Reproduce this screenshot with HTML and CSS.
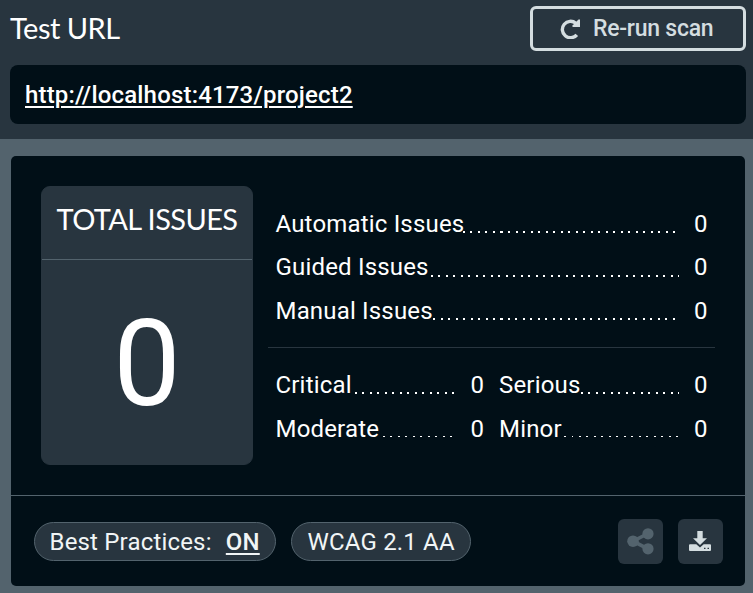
FILE: index.html
```html
<!DOCTYPE html>
<html lang="en">
<head>
<meta charset="utf-8">
<title>Test URL</title>
<link rel="stylesheet" href="styles.css">
</head>
<body>
<header class="top">
  <div class="bar">
    <h1>Test URL</h1>
    <button class="rerun"><svg width="20" height="20" viewBox="0 0 20 20" aria-hidden="true"><path d="M16.8 15.8A8.2 8.2 0 1 1 15.8 4.2" fill="none" stroke="currentColor" stroke-width="3.4"/><path d="M20 .5V8H12.5V6.5L18.5.5Z" fill="currentColor"/></svg><span>Re-run scan</span></button>
  </div>
  <div class="url"><a href="#">http://localhost:4173/project2</a></div>
</header>
<main class="panel">
  <div class="summary">
    <section class="total"><h2>TOTAL ISSUES</h2><div class="count">0</div></section>
    <section class="stats">
      <div class="group">
        <div class="row automatic"><span>Automatic Issues</span><i></i><b>0</b></div>
        <div class="row guided"><span>Guided Issues</span><i></i><b>0</b></div>
        <div class="row manual"><span>Manual Issues</span><i></i><b>0</b></div>
      </div>
      <div class="group severity">
        <div class="row critical"><span>Critical</span><i></i><b>0</b></div>
        <div class="row serious"><span>Serious</span><i></i><b>0</b></div>
        <div class="row moderate"><span>Moderate</span><i></i><b>0</b></div>
        <div class="row minor"><span>Minor</span><i></i><b>0</b></div>
      </div>
    </section>
  </div>
  <footer class="foot">
    <div class="pill best">Best Practices: <a href="#">ON</a></div>
    <div class="pill wcag">WCAG 2.1 AA</div>
    <button class="icon share" aria-label="Share"><svg width="27" height="27" viewBox="0 0 27 27"><path d="M21 5.5 6 13.2 21 20.8" fill="none" stroke="currentColor" stroke-width="3.6"/><g fill="currentColor"><circle cx="6" cy="13.2" r="5.8"/><circle cx="21" cy="5.8" r="5.6"/><circle cx="21" cy="20.8" r="5.6"/></g></svg></button>
    <button class="icon download" aria-label="Download"><svg width="22" height="20" viewBox="0 0 22 20"><path d="M8.3 0H13.7V7.3H18L11 14 4 7.3H8.3Z" fill="currentColor"/><path fill-rule="evenodd" d="M1 13.3H7.3L11 16.5 14.7 13.3H21Q22 13.3 22 14.3V19Q22 20 21 20H1Q0 20 0 19V14.3Q0 13.3 1 13.3ZM15 16.8V18H16.5V16.8ZM18.5 16.8V18H20V16.8Z" fill="currentColor"/></svg></button>
  </footer>
</main>
</body>
</html>
```
FILE: styles.css
```css
* { box-sizing: border-box; }
body { margin: 0; height: 593px; background: #53636d; color: #fff; font: 24px/36px Roboto, sans-serif; letter-spacing: .18px; overflow: hidden; }
h1, h2 { margin: 0; font-family: Lato, sans-serif; font-weight: 400; font-size: 29px; }
a { color: inherit; font-weight: 500; text-decoration-thickness: 2px; text-underline-offset: 3px; }
button { font: inherit; padding: 0; border: 0; }

.top { height: 139px; padding: 6px 7px 0 10px; background: #28353f; }
.bar { display: flex; justify-content: space-between; height: 45px; }
h1 { line-height: 44px; letter-spacing: -.5px; }
.rerun { display: flex; align-items: center; gap: 13px; width: 216px; height: 45px; padding-left: 27px; border: 3px solid #d4dde0; border-radius: 6px; background: none; color: #d4dde0; font-size: 23px; font-weight: 500; letter-spacing: -.25px; line-height: 36px; white-space: nowrap; }
.rerun svg { display: block; margin-top: 1px; }
.rerun span { margin-top: 1px; }
.url { height: 59px; margin-top: 14px; padding: 12px 15px; border-radius: 8px; background: #010f17; }

.panel { height: 430px; margin: 17px 8px 0 11px; border-radius: 5px; background: #010f17; }
.summary { display: flex; height: 340px; padding: 30px 30px 0; border-bottom: 1px solid #53636d; }
.total { display: flex; flex-direction: column; width: 212px; height: 279px; border: 1px solid #28353f; border-radius: 9px; background: #28353f; text-align: center; }
h2 { flex: none; height: 73px; padding-top: 14px; border-bottom: 1px solid #53636d; line-height: 36px; white-space: nowrap; letter-spacing: -.6px; }
.count { height: 204px; font-size: 120px; line-height: 209px; letter-spacing: 0; }
.stats { width: 447px; margin-left: 15px; padding-top: 19px; }
.group { display: grid; grid-template-rows: 43px 44px 43.5px; padding: 0 7.5px; }
.severity { grid-template-columns: 208.5px 208.5px; grid-template-rows: 44px 44px; column-gap: 15px; margin-top: 11px; padding-top: 18px; border-top: 1px solid #28353f; }
.row { display: flex; line-height: 38px; }
.row b { width: 28.5px; font-weight: 400; text-align: right; letter-spacing: 0; }
.row i { flex: 1; height: 2px; margin: 26px 0 0 var(--gap); background: repeating-linear-gradient(90deg, #fff 0 2px, transparent 2px 7.5px); }
.automatic { --gap: -1px; }
.guided { --gap: 2px; }
.guided i { margin-top: 27px; }
.manual { --gap: 0px; }
.critical { --gap: 3px; }
.serious { --gap: 0px; }
.moderate { --gap: 4px; }
.minor { --gap: 2px; }
.moderate i, .minor i { height: 1px; }

.foot { display: flex; align-items: center; height: 90px; padding: 0 22px 0 23px; }
.pill { height: 39px; border: 1px solid #53636d; border-radius: 20px; background: #28353f; color: #f1f5f6; line-height: 38px; white-space: nowrap; padding-left: 14.5px; }
.best { width: 242px; }
.best a { margin-left: 8px; }
.wcag { width: 180px; margin-left: 15px; padding-left: 15.5px; }
.icon { display: grid; place-items: center; width: 45px; height: 45px; margin-left: 15px; border-radius: 6px; background: #28353f; color: #d4dde0; }
.download svg { margin-right: 1px; }
.share { margin-left: auto; color: #53636d; }
```
